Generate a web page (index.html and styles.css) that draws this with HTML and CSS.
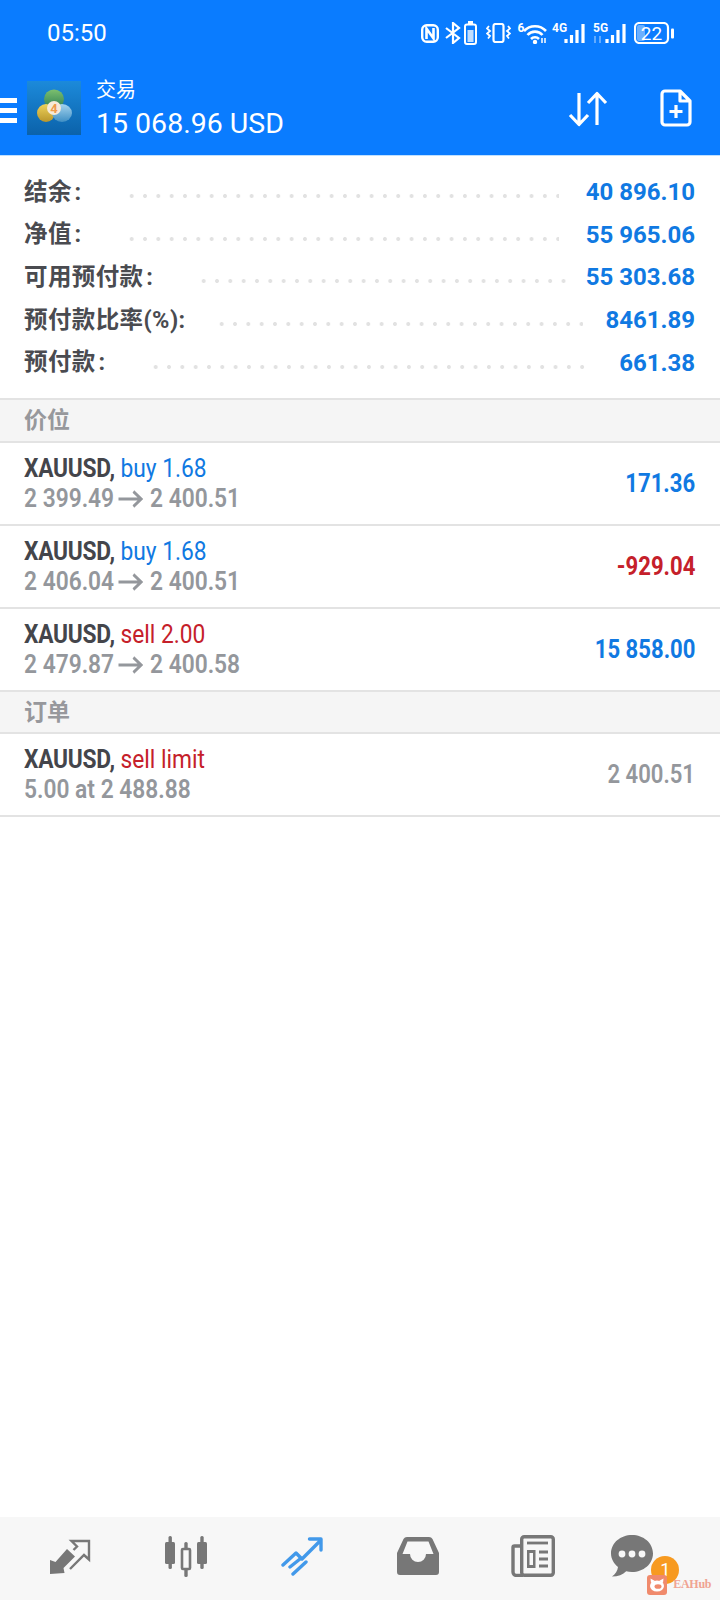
FILE: index.html
```html
<!DOCTYPE html>
<html lang="en">
<head>
    <meta name="viewport" content="width=device-width, initial-scale=1.0" />
    <title>Trade</title>
    <link rel="stylesheet" href="styles.css">
</head>
<body>
    <div class="top-bar">
        <div class="status-bar">
            <span class="time">05:50</span>
            <div class="status-icons">
                <svg width="18" height="19" viewBox="0 0 18 19"><rect x="1.200" y="1.200" width="15.600" height="16.600" rx="4.500" fill="none" stroke="#fff" stroke-width="2.400"/><path d="M5.500 15V4.500l7 10V4" fill="none" stroke="#fff" stroke-width="2.600"/></svg>
                <svg class="ml-6" width="16" height="22" viewBox="0 0 16 22"><path d="M1 6l13 10-6 5V1l6 5L1 16" fill="none" stroke="#fff" stroke-width="2.200"/></svg>
                <svg class="ml-3" width="13" height="24" viewBox="0 0 13 24"><rect x="4" y="0" width="5" height="3" fill="#fff"/><rect x="1" y="3.500" width="11" height="19.500" rx="2" fill="none" stroke="#fff" stroke-width="2"/><rect x="3.500" y="9" width="6" height="12" fill="#fff" opacity=".75"/></svg>
                <svg class="ml-9" width="25" height="20" viewBox="0 0 25 20"><rect x="7.500" y="1" width="10" height="18" rx="2" fill="none" stroke="#fff" stroke-width="2.200"/><path d="M3 3l-2 2.500 3 2.500-3 2.500 3 2.500-2 2.500M22 3l2 2.500-3 2.500 3 2.500-3 2.500 2 2.500" fill="none" stroke="#fff" stroke-width="1.800"/></svg>
                <svg class="ml-6" width="30" height="22" viewBox="0 0 30 22"><text x="0.500" y="10" class="tiny">6</text><path d="M7 9a15 15 0 0 1 22 0M10.500 13a10 10 0 0 1 15 0M14 17a5.500 5.500 0 0 1 8 0" fill="none" stroke="#fff" stroke-width="2.600"/><circle cx="18" cy="20" r="2.200" fill="#fff"/><path d="M25 21v-5M28 16v5" stroke="#fff" stroke-width="1.500"/></svg>
                <svg class="ml-5" width="34" height="22" viewBox="0 0 34 22"><text x="0" y="10" class="tiny">4G</text><path d="M14 17v4M19.500 13v8M25 8v13M31 2v19" fill="none" stroke="#fff" stroke-width="3.200"/></svg>
                <svg class="ml-7" width="34" height="22" viewBox="0 0 34 22"><text x="0" y="10" class="tiny">5G</text><path d="M2 14v7M7 14v7" stroke="#fff" stroke-width="1.600" opacity=".45"/><path d="M14 17v4M19.500 13v8M25 8v13M31 2v19" fill="none" stroke="#fff" stroke-width="3.200"/></svg>
                <svg class="ml-7" width="40" height="22" viewBox="0 0 40 22"><rect x="1" y="1" width="33" height="20" rx="4.500" fill="none" stroke="#fff" stroke-width="2.200"/><rect x="3" y="3" width="8" height="16" rx="2" fill="#fff" opacity=".4"/><text x="17.500" y="17.500" class="batt">22</text><rect x="37" y="6.500" width="3" height="10" rx="1" fill="#fff"/></svg>
            </div>
        </div>
        <div class="app-bar">
            <div class="burger"><span></span><span></span><span></span></div>
            <svg class="logo" width="54" height="54" viewBox="0 0 54 54">
                <defs>
                    <linearGradient id="logoBg" x1="0" y1="0" x2="0" y2="1"><stop offset="0" stop-color="#1c8ada"/><stop offset="1" stop-color="#0b62aa"/></linearGradient>
                    <linearGradient id="logoGreen" x1="0" y1="0" x2="0" y2="1"><stop offset="0" stop-color="#7cc06e"/><stop offset="1" stop-color="#2f7f54"/></linearGradient>
                    <linearGradient id="logoYellow" x1="0" y1="0" x2="0" y2="1"><stop offset="0" stop-color="#eed25a"/><stop offset="1" stop-color="#b8962c"/></linearGradient>
                    <linearGradient id="logoBlue" x1="0" y1="0" x2="0" y2="1"><stop offset="0" stop-color="#a5d4ee"/><stop offset="1" stop-color="#3f8fc4"/></linearGradient>
                </defs>
                <rect width="54" height="54" fill="url(#logoBg)"/>
                <ellipse cx="27" cy="18" rx="10" ry="9.500" fill="url(#logoGreen)"/>
                <ellipse cx="19" cy="32" rx="9" ry="9" fill="url(#logoYellow)"/>
                <ellipse cx="35" cy="32" rx="10" ry="9" fill="url(#logoBlue)"/>
                <circle cx="27" cy="27" r="7" fill="#f6ead8"/>
                <text x="27" y="32" class="logo-num">4</text>
            </svg>
            <div class="account">
                <div class="account-title">交易</div>
                <div class="account-sum">15 068.96 USD</div>
            </div>
            <svg class="swap-icon" width="40" height="36" viewBox="0 0 40 36"><path d="M11 2v31M2 24l9 9.500 9-9.500M29 34V3M20 12l9-9.500 9 9.500" fill="none" stroke="#fff" stroke-width="3.200" stroke-linejoin="round"/></svg>
            <svg class="file-icon" width="32" height="38" viewBox="0 0 32 38"><path d="M5 2h15l10 10v21a3 3 0 0 1-3 3H5a3 3 0 0 1-3-3V5a3 3 0 0 1 3-3zM20 2v10h10" fill="none" stroke="#fff" stroke-width="3.200" stroke-linejoin="round"/><path d="M16 16v13M9.500 22.500h13" stroke="#fff" stroke-width="3.200"/></svg>
        </div>
    </div>

    <div class="main">
        <div class="summary">
            <div class="sum-row"><span class="sum-label">结余&#8202;:</span><span class="dots d1"></span><span class="sum-value">40 896.10</span></div>
            <div class="sum-row"><span class="sum-label">净值&#8202;:</span><span class="dots d1"></span><span class="sum-value">55 965.06</span></div>
            <div class="sum-row"><span class="sum-label">可用预付款&#8202;:</span><span class="dots d2"></span><span class="sum-value">55 303.68</span></div>
            <div class="sum-row"><span class="sum-label">预付款比率(%):</span><span class="dots d3"></span><span class="sum-value">8461.89</span></div>
            <div class="sum-row"><span class="sum-label">预付款&#8202;:</span><span class="dots d4"></span><span class="sum-value">661.38</span></div>
        </div>

        <div class="section">价位</div>
        <div class="trade">
            <div class="trade-info">
                <div class="line-1"><b>XAUUSD,</b> <span class="blue">buy 1.68</span></div>
                <div class="line-2">2 399.49<svg class="arrow" width="29" height="18" viewBox="0 0 29 18"><path d="M1 9h26M18 1.500L27 9l-9 7.500" fill="none" stroke="#94979c" stroke-width="3"/></svg>2 400.51</div>
            </div>
            <div class="profit blue">171.36</div>
        </div>
        <div class="trade">
            <div class="trade-info">
                <div class="line-1"><b>XAUUSD,</b> <span class="blue">buy 1.68</span></div>
                <div class="line-2">2 406.04<svg class="arrow" width="29" height="18" viewBox="0 0 29 18"><path d="M1 9h26M18 1.500L27 9l-9 7.500" fill="none" stroke="#94979c" stroke-width="3"/></svg>2 400.51</div>
            </div>
            <div class="profit red">-929.04</div>
        </div>
        <div class="trade">
            <div class="trade-info">
                <div class="line-1"><b>XAUUSD,</b> <span class="red">sell 2.00</span></div>
                <div class="line-2">2 479.87<svg class="arrow" width="29" height="18" viewBox="0 0 29 18"><path d="M1 9h26M18 1.500L27 9l-9 7.500" fill="none" stroke="#94979c" stroke-width="3"/></svg>2 400.58</div>
            </div>
            <div class="profit blue">15 858.00</div>
        </div>

        <div class="section">订单</div>
        <div class="trade">
            <div class="trade-info">
                <div class="line-1"><b>XAUUSD,</b> <span class="red">sell limit</span></div>
                <div class="line-2">5.00 at 2 488.88</div>
            </div>
            <div class="profit grey">2 400.51</div>
        </div>
    </div>

    <div class="bottom-nav">
        <div class="nav-item">
            <svg width="44" height="40" viewBox="0 0 44 40"><path d="M1 38V24l5.500 2L18 13l8 7.500L14.500 32l1 5z" fill="#777"/><path d="M21 33l14-14 5 4.500V5H22.500L28 10.500 24.500 14" fill="none" stroke="#777" stroke-width="2.400"/></svg>
        </div>
        <div class="nav-item">
            <svg width="44" height="42" viewBox="0 0 44 42"><g fill="#777"><rect x="1" y="7" width="10" height="22" rx="1.500"/><rect x="4.500" y="1" width="3.400" height="33" rx="1.500"/><rect x="33" y="7" width="10" height="22" rx="1.500"/><rect x="36.300" y="1" width="3.400" height="33" rx="1.500"/><rect x="20.300" y="7" width="3.400" height="35" rx="1.500"/></g><rect x="18" y="14" width="8" height="20" rx="1" fill="#f7f7f7" stroke="#777" stroke-width="2.600"/></svg>
        </div>
        <div class="nav-item">
            <svg width="42" height="40" viewBox="0 0 42 40"><path d="M2 29l13-12 6 6L40 4M28.500 3H40v11" fill="none" stroke="#4299ea" stroke-width="3.400" stroke-linecap="round" stroke-linejoin="round"/><path d="M9 31l10-8M12 38l13-12" fill="none" stroke="#4299ea" stroke-width="3.400" stroke-linecap="round"/></svg>
        </div>
        <div class="nav-item">
            <svg width="42" height="38" viewBox="0 0 42 38"><path d="M10 0h22a4 4 0 0 1 3.500 2L42 16v19a3 3 0 0 1-3 3H3a3 3 0 0 1-3-3V16L6.500 2A4 4 0 0 1 10 0z" fill="#777"/><path d="M5.500 17L10.500 4.500h21l5 12.500H29a8 8 0 0 1-16 0z" fill="#f7f7f7"/></svg>
        </div>
        <div class="nav-item">
            <svg width="44" height="42" viewBox="0 0 44 42"><g fill="none" stroke="#777" stroke-width="3.400"><rect x="10.700" y="1.700" width="31.600" height="38.600" rx="2.500"/><path d="M10 11H3.500A1.500 1.500 0 0 0 2 12.500V37a3.500 3.500 0 0 0 3.500 3.500H12"/><path d="M16 8h21" stroke-width="2.800"/><path d="M28 17h9M28 24h9M28 31h9" stroke-width="2.800"/></g><rect x="16" y="15" width="8.500" height="18" fill="#777"/><rect x="18.500" y="18" width="3.500" height="12" fill="#f7f7f7"/></svg>
        </div>
        <div class="nav-item chat">
            <svg width="42" height="42" viewBox="0 0 42 42"><path d="M21 0c11.500 0 21 8 21 18.500S32.500 37 21 37c-2 0-4-.3-5.800-.8C12 39.500 7 41.500 1 41.500c3.500-2.500 5.500-5.500 6-9.500C3 28.500 0 24 0 18.500 0 8 9.500 0 21 0z" fill="#777"/><circle cx="11" cy="19" r="3.400" fill="#f7f7f7"/><circle cx="21" cy="19" r="3.400" fill="#f7f7f7"/><circle cx="31" cy="19" r="3.400" fill="#f7f7f7"/></svg>
            <span class="badge">1</span>
            <div class="watermark">
                <svg width="20" height="20" viewBox="0 0 20 20"><rect width="20" height="20" rx="3" fill="#f08a6c"/><path d="M4 8L3.500 3.500 8 6zM16 8l.5-4.500L12 6z" fill="#fff"/><ellipse cx="10" cy="11" rx="7" ry="5.500" fill="#fff"/><ellipse cx="11" cy="11.500" rx="3.500" ry="2.300" fill="#f08a6c"/></svg>
                <span>EAHub</span>
            </div>
        </div>
    </div>
</body>
</html>
```

FILE: styles.css
```css
* {
    padding: 0;
    margin: 0;
    box-sizing: border-box;
}
body {
    width: 720px;
    height: 1600px;
    display: flex;
    flex-direction: column;
    overflow: hidden;
    background-color: #ffffff;
    font-family: "Roboto", "Noto Sans CJK SC", sans-serif;
}

/* Top bar */
.top-bar {
    background-color: #0a7cff;
    color: #ffffff;
    height: 156px;
    border-bottom: 1px solid #bfe0ff;
}
.status-bar {
    height: 66px;
    display: flex;
    align-items: center;
    justify-content: space-between;
    padding: 0 46px 0 47px;
}
.time {
    font-size: 24px;
}
.status-icons {
    display: flex;
    align-items: center;
}
.ml-3 { margin-left: 3px; }
.ml-5 { margin-left: 5px; }
.ml-6 { margin-left: 6px; }
.ml-7 { margin-left: 7px; }
.ml-9 { margin-left: 9px; }
.tiny {
    font-family: "Roboto", sans-serif;
    font-size: 12px;
    font-weight: 700;
    fill: #ffffff;
}
.batt {
    font-family: "Roboto", sans-serif;
    font-size: 19px;
    fill: #ffffff;
    text-anchor: middle;
}
.app-bar {
    display: flex;
    align-items: center;
    height: 89px;
}
.burger {
    width: 17px;
    height: 25px;
    display: flex;
    flex-direction: column;
    justify-content: space-between;
    margin-right: 10px;
    margin-bottom: 1px;
}
.burger span {
    height: 5px;
    background-color: #ffffff;
}
.logo {
    margin-top: -5px;
}
.account {
    margin-left: 15px;
    flex: 1;
}
.account-title {
    font-size: 20px;
    line-height: 26px;
}
.account-sum {
    font-size: 28.500px;
    line-height: 41px;
}
.swap-icon {
    margin-right: 52px;
    margin-bottom: 4px;
}
.file-icon {
    margin-right: 28px;
    margin-bottom: 6px;
}
.logo-num {
    font-family: "Roboto", sans-serif;
    font-size: 13px;
    font-weight: 700;
    fill: #ee9a4a;
    text-anchor: middle;
}

/* Summary block */
.main {
    flex: 1;
}
.summary {
    padding: 14px 25px 15px 24px;
}
.sum-row {
    display: flex;
    align-items: center;
    height: 42.600px;
}
.sum-label {
    font-family: "Roboto", "Noto Sans CJK SC", sans-serif;
    font-size: 23.500px;
    font-weight: 700;
    color: #4a4b50;
    letter-spacing: 0.4px;
    margin-top: -3px;
}
.sum-value {
    font-size: 24px;
    font-weight: 700;
    color: #1079e2;
    margin-top: 2px;
}
.dots {
    flex: 1;
    height: 6px;
    background-image: radial-gradient(circle, #e2e2e2 1.800px, transparent 2.200px);
    background-size: 13.333px 6px;
    background-repeat: repeat-x;
}
.d1 { margin: 10px 27px 0 43px; }
.d2 { margin: 10px 20px 0 44px; }
.d3 { margin: 10px 22px 0 29px; }
.d4 { margin: 10px 30px 0 43px; }

/* Lists */
.section {
    height: 44px;
    background-color: #f5f5f5;
    border-top: 2px solid #e3e3e3;
    border-bottom: 2px solid #e3e3e3;
    padding-left: 24px;
    font-family: "Noto Sans CJK SC", sans-serif;
    font-size: 23px;
    font-weight: 700;
    line-height: 36px;
    color: #97989c;
}
.summary + .section {
    height: 45px;
}
.trade {
    height: 83px;
    display: flex;
    align-items: center;
    justify-content: space-between;
    padding: 0 25px 0 24px;
    border-bottom: 2px solid #e3e3e3;
}
.trade + .section {
    margin-top: -2px;
}
.trade-info {
    flex: 1;
    transform: scaleX(0.875);
    transform-origin: left center;
}
.line-1 {
    font-size: 26px;
    line-height: 30px;
    color: #44454b;
    white-space: nowrap;
}
.line-1 b {
    letter-spacing: -0.3px;
}
.line-2 {
    font-size: 26px;
    line-height: 30px;
    font-weight: 600;
    color: #94979c;
    white-space: nowrap;
}
.arrow {
    margin: 0 8px 0 4px;
    vertical-align: -1px;
}
.profit {
    font-size: 26px;
    font-weight: 700;
    white-space: nowrap;
    transform: scaleX(0.85);
    transform-origin: right center;
}
.blue { color: #1079e2; }
.red { color: #c5202a; }
.grey { color: #94979c; font-weight: 600; }

/* Bottom tabs */
.bottom-nav {
    height: 83px;
    background-color: #f7f7f7;
    display: flex;
    align-items: center;
    padding: 0 13px 6px 13px;
}
.nav-item {
    width: 116px;
    display: flex;
    justify-content: center;
}
.chat {
    position: relative;
    padding-right: 34px;
}
.badge {
    position: absolute;
    top: 21px;
    left: 60px;
    width: 28px;
    height: 28px;
    border-radius: 50%;
    background-color: #f79a20;
    color: #fff;
    font-size: 18px;
    line-height: 28px;
    text-align: center;
}
.watermark {
    position: absolute;
    top: 40px;
    left: 56px;
    display: flex;
    align-items: center;
    gap: 6px;
    font-family: "Liberation Serif", serif;
    font-size: 12px;
    font-weight: 700;
    letter-spacing: -0.3px;
    color: #f0a392;
}
```
